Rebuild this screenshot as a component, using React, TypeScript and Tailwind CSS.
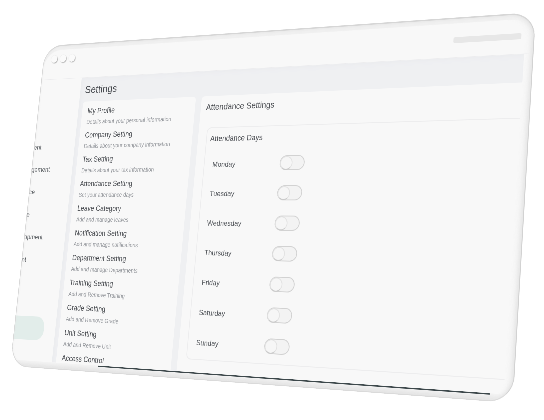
import { useLayoutEffect, useRef, useState } from "react";

type Point = [number, number];

const DEVICE_WIDTH = 1260;
const DEVICE_HEIGHT = 800;
const STAGE_WIDTH = 544;

// Where the tilted device's corners land on the stage, clockwise from top left.
const CORNERS: Point[] = [
  [45, 46],
  [536, 12],
  [513, 403],
  [10, 366],
];

const modules = ["ent", "gement", "ce", "e", "opment", "nt"];

const settings = [
  { title: "My Profile", note: "Details about your personal information" },
  { title: "Company Setting", note: "Details about your company information" },
  { title: "Tax Setting", note: "Details about your tax information" },
  { title: "Attendance Setting", note: "Set your attendance days" },
  { title: "Leave Category", note: "Add and manage leaves" },
  { title: "Notification Setting", note: "Add and manage notifications" },
  { title: "Department Setting", note: "Add and manage Departments" },
  { title: "Training Setting", note: "Add and Remove Training" },
  { title: "Grade Setting", note: "Add and Remove Grade" },
  { title: "Unit Setting", note: "Add and Remove Unit" },
  { title: "Access Control", note: "" },
];

const days = ["Monday", "Tuesday", "Wednesday", "Thursday", "Friday", "Saturday", "Sunday"];

// Perspective matrix that carries the flat device onto the four corners.
function perspective(scale: number) {
  const [[x0, y0], [x1, y1], [x2, y2], [x3, y3]] = CORNERS.map(([x, y]) => [x * scale, y * scale]);
  const sx = x0 - x1 + x2 - x3;
  const sy = y0 - y1 + y2 - y3;
  const dx1 = x1 - x2;
  const dx2 = x3 - x2;
  const dy1 = y1 - y2;
  const dy2 = y3 - y2;
  const det = dx1 * dy2 - dx2 * dy1;
  const g = (sx * dy2 - sy * dx2) / det;
  const h = (dx1 * sy - dy1 * sx) / det;
  const w = DEVICE_WIDTH;
  const t = DEVICE_HEIGHT;
  const m = [
    (x1 - x0 + g * x1) / w, (y1 - y0 + g * y1) / w, 0, g / w,
    (x3 - x0 + h * x3) / t, (y3 - y0 + h * y3) / t, 0, h / t,
    0, 0, 1, 0,
    x0, y0, 0, 1,
  ];
  return `matrix3d(${m.map((n) => n.toFixed(8)).join(",")})`;
}

function TitleBar() {
  return (
    <header className="flex h-[88px] shrink-0 items-center justify-between border-b border-[#ececee] pr-7 pl-6">
      <div className="flex gap-2 pb-4">
        <span className="size-[19px] rounded-full bg-[#fafafa] shadow-[2px_2px_2px_#b8b8b8,0_0_2px_#dcdcdc]" />
        <span className="size-[19px] rounded-full bg-[#fafafa] shadow-[2px_2px_2px_#b8b8b8,0_0_2px_#dcdcdc]" />
        <span className="size-[19px] rounded-full bg-[#fafafa] shadow-[2px_2px_2px_#b8b8b8,0_0_2px_#dcdcdc]" />
      </div>
      <div className="mt-3 h-[13px] w-[148px] rounded bg-[#e7e7e7]" />
    </header>
  );
}

function Sidebar() {
  return (
    <nav className="flex w-[124px] shrink-0 flex-col overflow-hidden pt-[144px]">
      {modules.map((name) => (
        <a key={name} href="#" className="block h-14 text-[17px] leading-[56px] text-[#5b5f63]">
          {name}
        </a>
      ))}
      <div className="mt-[109px] h-[57px] w-[90px] rounded-r-[24px] bg-[#e2edea]" />
    </nav>
  );
}

function SettingsMenu() {
  return (
    <ul className="flex w-[322px] shrink-0 flex-col gap-[6px] overflow-hidden rounded-t-lg bg-[#f8f8f8] pt-[10px] pl-4">
      {settings.map(({ title, note }) => (
        <li key={title} className="shrink-0">
          <a href="#" className="block whitespace-nowrap">
            <span className="block text-[18px] leading-7 text-[#46494e]">{title}</span>
            {note && <span className="block text-[14px] leading-[26px] text-[#94979c]">{note}</span>}
          </a>
        </li>
      ))}
    </ul>
  );
}

function DayRow({ day }: { day: string }) {
  return (
    <li className="flex h-[68px] items-center">
      <label htmlFor={day} className="w-[174px] pt-1 text-[17px] text-[#505459]">
        {day}
      </label>
      <input
        id={day}
        type="checkbox"
        role="switch"
        className="flex h-[34px] w-[62px] appearance-none items-center rounded-full border-2 border-[#d2d2d2] bg-[#f3f3f3] before:-ml-px before:size-[31px] before:rounded-full before:border-2 before:border-[#e2e2e2] before:border-b-[#cacaca] before:bg-[#f6f6f6] before:content-[''] checked:justify-end"
      />
    </li>
  );
}

function AttendancePanel() {
  return (
    <section className="flex-1 overflow-hidden rounded-tl-lg bg-[#f8f8f8] pt-3 pl-[14px]">
      <h2 className="mb-[34px] text-[20px] leading-7 text-[#484b50]">Attendance Settings</h2>
      <div className="ml-2 rounded-l-[12px] border-2 border-r-0 border-[#ededee] pl-[9px]">
        <h3 className="text-[18px] leading-[50px] text-[#484b50]">Attendance Days</h3>
        <ul className="pb-1 pl-3">
          {days.map((day) => (
            <DayRow key={day} day={day} />
          ))}
        </ul>
      </div>
    </section>
  );
}

export default function App() {
  const stage = useRef<HTMLElement>(null);
  const [scale, setScale] = useState(1);

  useLayoutEffect(() => {
    const fit = () => stage.current && setScale(stage.current.clientWidth / STAGE_WIDTH);
    fit();
    window.addEventListener("resize", fit);
    return () => window.removeEventListener("resize", fit);
  }, []);

  return (
    <main
      ref={stage}
      className="aspect-[136/105] w-full overflow-hidden bg-white font-['Liberation_Sans',Arial,sans-serif]"
    >
      <div
        className="relative flex h-[800px] w-[1260px] origin-top-left flex-col overflow-hidden rounded-[52px] bg-[#f8f8f8]"
        style={{ transform: perspective(scale) }}
      >
        <TitleBar />
        <div className="flex min-h-0 flex-1 pr-5">
          <Sidebar />
          <div className="flex min-w-0 flex-1 flex-col bg-[#eff0f2] pl-3 shadow-[inset_6px_4px_10px_#ebecef]">
            <h1 className="pl-[2px] text-[26px] leading-[60px] text-[#484b50]">Settings</h1>
            <div className="flex min-h-0 flex-1 gap-4">
              <SettingsMenu />
              <AttendancePanel />
            </div>
          </div>
        </div>
        <div className="h-4 shrink-0 bg-linear-to-b from-[#f4f4f4] to-[#e2e2e2] pr-12 pl-[258px]">
          <div className="h-[3px] rounded-r-full bg-[#3d484b]" />
        </div>
        <div className="pointer-events-none absolute inset-0 rounded-[52px] border-t-3 border-r-2 border-b-2 border-l-2 border-t-[#d6d6d6] border-r-[#d2d2d2] border-b-[#dadada] border-l-[#d8d8d8] shadow-[inset_-3px_1px_8px_#e2e2e2,inset_-12px_5px_8px_#f4f4f4,inset_0_10px_1px_#f0f0f0]" />
      </div>
    </main>
  );
}
